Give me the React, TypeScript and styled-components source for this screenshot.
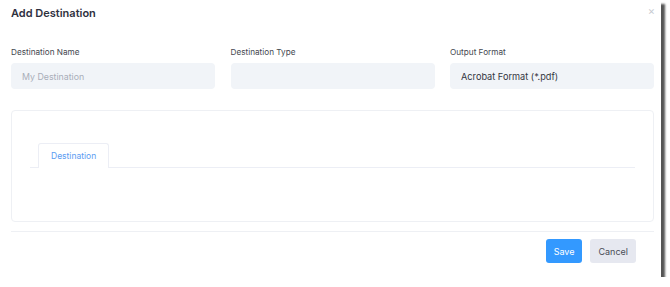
import React from "react";
import styled, { createGlobalStyle } from "styled-components";

const Global = createGlobalStyle`
  html, body { margin: 0; padding: 0; background: #ffffff; }
  body { font-family: "Inter", "Noto Sans", sans-serif; }
  * { box-sizing: border-box; }
`;

const Dialog = styled.div`
  width: 661px;
  height: 277px;
  background: #ffffff;
  box-shadow: 4px 4px 2px rgba(55, 55, 55, 0.85);
  padding: 0 7px 0 11px;
  display: flex;
  flex-direction: column;
  position: relative;
`;

const Header = styled.div`
  height: 26px;
  display: flex;
  align-items: center;
  justify-content: space-between;
`;

const Title = styled.h1`
  margin: 0;
  font-size: 11px;
  font-weight: 600;
  color: #2f3140;
`;

const Close = styled.span`
  position: absolute;
  right: 6px;
  top: 6px;
  font-size: 11px;
  color: #c8cbd2;
  line-height: 1;
`;

const Fields = styled.div`
  margin-top: 20px;
  display: grid;
  grid-template-columns: 204px 204px 204px;
  column-gap: 15.5px;
`;

const Field = styled.div`
  display: flex;
  flex-direction: column;
`;

const Label = styled.label`
  font-size: 8.2px;
  color: #44474f;
  height: 17px;
  line-height: 12px;
`;

const Input = styled.div<{ $placeholder?: boolean }>`
  height: 26px;
  border-radius: 4px;
  background: #f1f4f8;
  padding: 0 11px;
  display: flex;
  align-items: center;
  font-size: ${(p) => (p.$placeholder ? "8.8px" : "9.2px")};
  color: ${(p) => (p.$placeholder ? "#a9aeb8" : "#33363f")};
`;

const Card = styled.div`
  margin-top: 21px;
  height: 112px;
  border: 1px solid #eef0f4;
  border-radius: 4px;
  padding: 32px 18px 0 18px;
`;

const TabBar = styled.div`
  display: flex;
  padding-left: 8px;
  border-bottom: 1px solid #eceef5;
`;

const Tab = styled.div`
  height: 25px;
  padding: 0 12px;
  border: 1px solid #eceef5;
  border-bottom: none;
  border-radius: 3px 3px 0 0;
  margin-bottom: -1px;
  background: #fff;
  display: flex;
  align-items: center;
  font-size: 8.5px;
  color: #5b9cf2;
`;

const Divider = styled.div`
  margin-top: 9px;
  height: 1px;
  background: #eef0f4;
`;

const Footer = styled.div`
  margin-top: 7px;
  display: flex;
  justify-content: flex-end;
  gap: 8px;
  padding-right: 18px;
`;

const Button = styled.button<{ $primary?: boolean }>`
  height: 24px;
  padding: 0 8px;
  border: none;
  border-radius: 3px;
  font-family: inherit;
  font-size: 9px;
  background: ${(p) => (p.$primary ? "#3399ff" : "#e6e8f0")};
  color: ${(p) => (p.$primary ? "#ffffff" : "#4a4d56")};
`;

export default function App() {
  return (
    <>
      <Global />
      <Dialog>
        <Header>
          <Title>Add Destination</Title>
        </Header>
        <Close>×</Close>
        <Fields>
          <Field>
            <Label>Destination Name</Label>
            <Input $placeholder>My Destination</Input>
          </Field>
          <Field>
            <Label>Destination Type</Label>
            <Input />
          </Field>
          <Field>
            <Label>Output Format</Label>
            <Input>Acrobat Format (*.pdf)</Input>
          </Field>
        </Fields>
        <Card>
          <TabBar>
            <Tab>Destination</Tab>
          </TabBar>
        </Card>
        <Divider />
        <Footer>
          <Button $primary>Save</Button>
          <Button>Cancel</Button>
        </Footer>
      </Dialog>
    </>
  );
}
